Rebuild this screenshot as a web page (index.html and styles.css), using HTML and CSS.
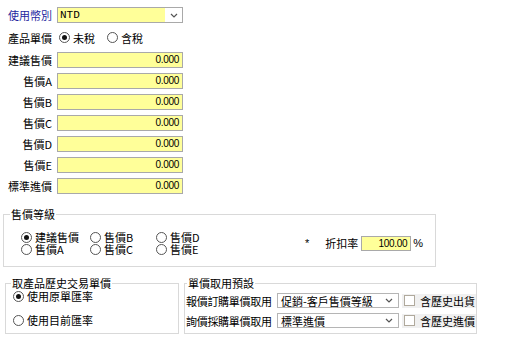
FILE: index.html
```html
<!DOCTYPE html>
<html>
<head>
    <meta charset="utf-8">
    <link rel="stylesheet" href="styles.css">
</head>
<body>
    <div class="form">
        <div class="rows">
            <div class="row">
                <span class="label label-blue">使用幣別</span>
                <div class="combo combo-currency">
                    <span class="combo-text mono">NTD</span>
                    <span class="combo-arrow"><svg width="8" height="5" viewBox="0 0 8 5"><path d="M1 1 L4 4 L7 1" fill="none" stroke="#555" stroke-width="1.2"/></svg></span>
                </div>
            </div>
            <div class="row row-tax">
                <span class="label">產品單價</span>
                <span class="opt opt-first"><span class="radio checked"></span>未稅</span>
                <span class="opt opt-next"><span class="radio"></span>含稅</span>
            </div>
            <div class="row"><span class="label">建議售價</span><span class="field">0.000</span></div>
            <div class="row"><span class="label">售價A</span><span class="field">0.000</span></div>
            <div class="row"><span class="label">售價B</span><span class="field">0.000</span></div>
            <div class="row"><span class="label">售價C</span><span class="field">0.000</span></div>
            <div class="row"><span class="label">售價D</span><span class="field">0.000</span></div>
            <div class="row"><span class="label">售價E</span><span class="field">0.000</span></div>
            <div class="row"><span class="label">標準進價</span><span class="field">0.000</span></div>
        </div>

        <fieldset class="group group-level">
            <legend>售價等級</legend>
            <div class="level-body">
                <div class="level-grid">
                    <span class="opt"><span class="radio checked"></span>建議售價</span>
                    <span class="opt"><span class="radio"></span>售價B</span>
                    <span class="opt"><span class="radio"></span>售價D</span>
                    <span class="opt"><span class="radio"></span>售價A</span>
                    <span class="opt"><span class="radio"></span>售價C</span>
                    <span class="opt"><span class="radio"></span>售價E</span>
                </div>
                <div class="discount">
                    <span class="star">*</span>
                    <span class="rate-label">折扣率</span>
                    <span class="field field-rate">100.00</span>
                    <span class="pct">%</span>
                </div>
            </div>
        </fieldset>

        <div class="bottom">
            <fieldset class="group group-history">
                <legend>取產品歷史交易單價</legend>
                <div class="history-body">
                    <span class="opt"><span class="radio checked"></span>使用原單匯率</span>
                    <span class="opt"><span class="radio"></span>使用目前匯率</span>
                </div>
            </fieldset>
            <fieldset class="group group-default">
                <legend>單價取用預設</legend>
                <div class="default-body">
                    <div class="default-row">
                        <span class="default-label">報價訂購單價取用</span>
                        <div class="combo combo-plain">
                            <span class="combo-text">促銷-客戶售價等級</span>
                            <svg width="8" height="5" viewBox="0 0 8 5"><path d="M1 1 L4 4 L7 1" fill="none" stroke="#555" stroke-width="1.2"/></svg>
                        </div>
                        <span class="check"><span class="box"></span>含歷史出貨</span>
                    </div>
                    <div class="default-row">
                        <span class="default-label">詢價採購單價取用</span>
                        <div class="combo combo-plain">
                            <span class="combo-text">標準進價</span>
                            <svg width="8" height="5" viewBox="0 0 8 5"><path d="M1 1 L4 4 L7 1" fill="none" stroke="#555" stroke-width="1.2"/></svg>
                        </div>
                        <span class="check"><span class="box"></span>含歷史進價</span>
                    </div>
                </div>
            </fieldset>
        </div>
    </div>
</body>
</html>
```

FILE: styles.css
```css
body {
    margin: 0;
    background: #fff;
    color: #000;
    font-family: "Noto Sans CJK TC", "Liberation Sans", sans-serif;
    font-size: 11px;
    line-height: 12px;
}

.form {
    padding-top: 7px;
}

/* 上方欄位 */
.rows {
    display: flex;
    flex-direction: column;
    gap: 5px;
}

.row {
    display: flex;
    align-items: center;
    height: 16px;
    gap: 5px;
}

.row-tax {
    height: 19px;
}

.label {
    width: 52px;
    text-align: right;
    white-space: nowrap;
}

.label-blue {
    color: #1f1f9e;
}

.field {
    box-sizing: border-box;
    width: 126px;
    height: 16px;
    padding: 0 3px;
    background: #ffff99;
    border: 1px solid #a9a9a9;
    text-align: right;
    font-family: "Liberation Sans", sans-serif;
    font-size: 10px;
    line-height: 14px;
    letter-spacing: -0.3px;
}

.mono {
    font-family: "Liberation Mono", monospace;
    font-size: 11px;
}

.combo {
    box-sizing: border-box;
    display: flex;
    align-items: center;
    height: 16px;
    border: 1px solid #a9a9a9;
    background: #fff;
}

.combo-currency {
    width: 126px;
}

.combo-currency .combo-text {
    flex: 1;
    align-self: stretch;
    background: #ffff99;
    padding-left: 2px;
    line-height: 14px;
}

.combo-arrow {
    width: 17px;
    display: flex;
    justify-content: center;
}

/* 單選 */
.opt {
    display: inline-flex;
    align-items: center;
    gap: 3px;
    white-space: nowrap;
}

.opt-first {
    margin-left: 2px;
}

.opt-next {
    margin-left: 7px;
}

.radio {
    box-sizing: border-box;
    width: 11px;
    height: 11px;
    border: 1px solid #555;
    border-radius: 50%;
    background: #fff;
    display: flex;
    align-items: center;
    justify-content: center;
}

.radio.checked::after {
    content: "";
    width: 5px;
    height: 5px;
    border-radius: 50%;
    background: #111;
}

/* 群組框 */
.group {
    margin: 0;
    padding: 0;
    min-width: 0;
    border: 1px solid #d9d9d9;
}

.group legend {
    padding: 0 1px;
    line-height: 12px;
}

.group-level {
    width: 433px;
    box-sizing: border-box;
    margin: 14px 0 0 3px;
}

.group-level legend {
    margin-left: 6px;
}

.level-body {
    display: flex;
    padding: 11px 12px 11px 17px;
}

.level-grid {
    display: grid;
    grid-template-columns: 69px 66px auto;
    grid-auto-rows: 12px;
}

.discount {
    margin-left: auto;
    display: flex;
    align-items: center;
    align-self: center;
}

.star {
    font-family: "Liberation Sans", sans-serif;
    margin-right: 16px;
}

.rate-label {
    margin-right: 3px;
}

.field-rate {
    width: 50px;
    height: 15px;
    line-height: 13px;
}

.pct {
    font-family: "Liberation Sans", sans-serif;
    margin-left: 2px;
}

/* 下方兩組 */
.bottom {
    display: flex;
    gap: 5px;
    margin: 10px 0 0 5px;
}

.group-history {
    width: 174px;
    box-sizing: border-box;
}

.group-history legend {
    margin-left: 5px;
}

.history-body {
    display: flex;
    flex-direction: column;
    gap: 12px;
    padding: 1px 0 6px 7px;
}

.group-default {
    width: 293px;
    box-sizing: border-box;
}

.group-default legend {
    margin-left: 2px;
}

.default-body {
    display: flex;
    flex-direction: column;
    gap: 5px;
    padding: 4px 0 5px 1px;
}

.default-row {
    display: flex;
    align-items: center;
    height: 15px;
}

.default-label {
    width: 91px;
    white-space: nowrap;
    letter-spacing: -0.3px;
}

.combo-plain {
    width: 122px;
    height: 15px;
    padding: 0 5px 0 3px;
    justify-content: space-between;
    border-color: #b5b5b5;
}

.check {
    display: flex;
    align-items: center;
    gap: 5px;
    height: 14px;
    margin-left: 3px;
    padding-left: 2px;
    flex: 1;
    background: #f0f0f0;
    white-space: nowrap;
    overflow: hidden;
}

.box {
    box-sizing: border-box;
    flex: none;
    width: 11px;
    height: 11px;
    border: 1px solid #b0a99c;
    background: #fff;
}
```
